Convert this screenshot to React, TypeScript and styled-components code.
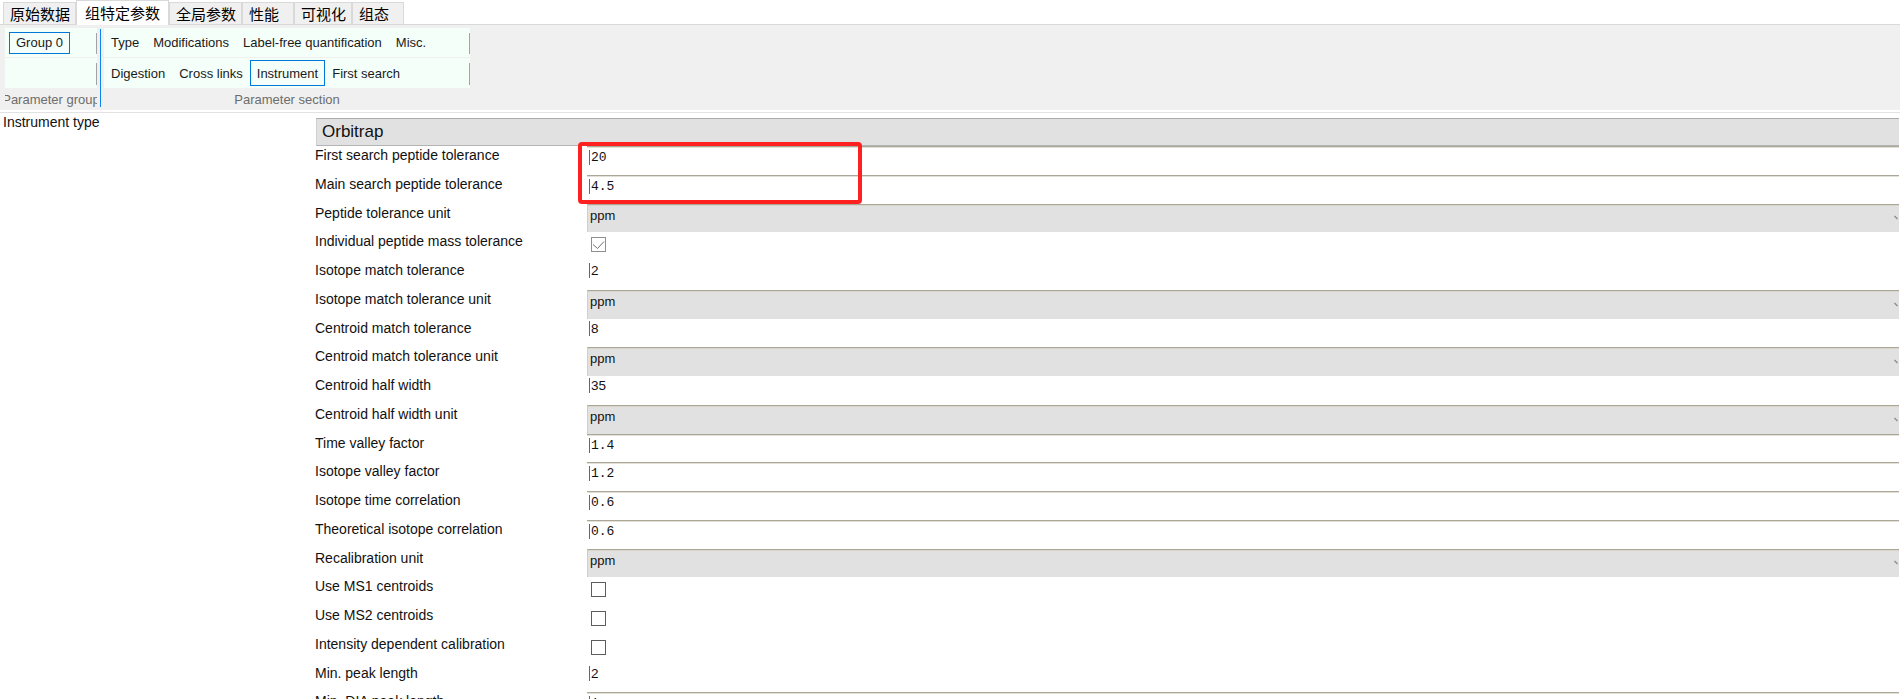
import styled, { createGlobalStyle } from "styled-components";

type Kind = "text" | "num" | "combo" | "check";

interface Param {
  label: string;
  kind: Kind;
  value?: string;
  checked?: boolean;
}

const tabs = ["原始数据", "组特定参数", "全局参数", "性能", "可视化", "组态"];

const sectionRows = [
  ["Type", "Modifications", "Label-free quantification", "Misc."],
  ["Digestion", "Cross links", "Instrument", "First search"],
];

const params: Param[] = [
  { label: "First search peptide tolerance", kind: "text", value: "20" },
  { label: "Main search peptide tolerance", kind: "text", value: "4.5" },
  { label: "Peptide tolerance unit", kind: "combo", value: "ppm" },
  { label: "Individual peptide mass tolerance", kind: "check", checked: true },
  { label: "Isotope match tolerance", kind: "num", value: "2" },
  { label: "Isotope match tolerance unit", kind: "combo", value: "ppm" },
  { label: "Centroid match tolerance", kind: "num", value: "8" },
  { label: "Centroid match tolerance unit", kind: "combo", value: "ppm" },
  { label: "Centroid half width", kind: "num", value: "35" },
  { label: "Centroid half width unit", kind: "combo", value: "ppm" },
  { label: "Time valley factor", kind: "text", value: "1.4" },
  { label: "Isotope valley factor", kind: "text", value: "1.2" },
  { label: "Isotope time correlation", kind: "text", value: "0.6" },
  { label: "Theoretical isotope correlation", kind: "text", value: "0.6" },
  { label: "Recalibration unit", kind: "combo", value: "ppm" },
  { label: "Use MS1 centroids", kind: "check", checked: false },
  { label: "Use MS2 centroids", kind: "check", checked: false },
  { label: "Intensity dependent calibration", kind: "check", checked: false },
  { label: "Min. peak length", kind: "num", value: "2" },
  { label: "Min. DIA peak length", kind: "text", value: "1" },
  { label: "Use intensity prediction", kind: "check", checked: false },
];

function Control({ p }: { p: Param }) {
  if (p.kind === "text") {
    return (
      <TextBox>
        <Caret $mono>{p.value}</Caret>
      </TextBox>
    );
  }
  if (p.kind === "num") {
    return (
      <NumBox>
        <Caret>{p.value}</Caret>
      </NumBox>
    );
  }
  if (p.kind === "combo") {
    return (
      <Combo>
        <ComboText>{p.value}</ComboText>
        <svg width="4" height="5" viewBox="0 0 4 5">
          <path d="M0.5 1 L3.5 4" stroke="#8a8a8a" strokeWidth="1.2" fill="none" />
        </svg>
      </Combo>
    );
  }
  return (
    <CheckCell>
      <CheckBox $checked={!!p.checked}>
        {p.checked && (
          <svg width="13" height="13" viewBox="0 0 13 13">
            <path d="M1 6.5 L5.5 10.5 L12 3.5" stroke="#6f6f6f" strokeWidth="1" fill="none" />
          </svg>
        )}
      </CheckBox>
    </CheckCell>
  );
}

export default function App() {
  return (
    <Page>
      <GlobalStyle />
      <TabStrip>
        {tabs.map((t, i) => (
          <Tab key={t} $active={i === 1}>
            {t}
          </Tab>
        ))}
      </TabStrip>

      <TopPanel>
        <Section $width={92}>
          <Strip $height={29}>
            <GroupButton>Group 0</GroupButton>
            <RowEdge />
          </Strip>
          <Strip $height={30}>
            <RowEdge />
          </Strip>
          <Caption>Parameter group</Caption>
        </Section>
        <Splitter />
        <Section $width={366}>
          {sectionRows.map((row, r) => (
            <Strip key={r} $height={r === 0 ? 29 : 30}>
              {row.map((item) => (
                <SectionItem key={item} $active={item === "Instrument"}>
                  {item}
                </SectionItem>
              ))}
              <RowEdge />
            </Strip>
          ))}
          <Caption>Parameter section</Caption>
        </Section>
      </TopPanel>

      <Main>
        <OuterLabel>Instrument type</OuterLabel>
        <div>
          <InstrumentCombo>Orbitrap</InstrumentCombo>
          <ParamGrid>
            {params.map((p) => (
              <ParamRow key={p.label}>
                <ParamLabel>{p.label}</ParamLabel>
                <Control p={p} />
              </ParamRow>
            ))}
          </ParamGrid>
        </div>
      </Main>

      <Highlight />
    </Page>
  );
}

const GlobalStyle = createGlobalStyle`
  html, body {
    margin: 0;
    padding: 0;
    background: #ffffff;
    overflow: hidden;
  }
  body {
    font-family: "Liberation Sans", Arial, sans-serif;
    color: #111;
  }
`;

const Page = styled.div`
  position: relative;
  width: 1900px;
  height: 699px;
  overflow: hidden;
  background: #fff;
`;

const TabStrip = styled.div`
  display: flex;
  align-items: flex-end;
  height: 24px;
  padding-left: 3px;
  position: relative;
  z-index: 1;
`;

const Tab = styled.div<{ $active: boolean }>`
  box-sizing: border-box;
  display: flex;
  align-items: center;
  min-width: 52px;
  height: ${(p) => (p.$active ? "25px" : "22px")};
  margin-bottom: ${(p) => (p.$active ? "-1px" : "0")};
  padding: ${(p) => (p.$active ? "0 8px 1px 8px" : "0 5px 0 6px")};
  border: 1px solid #d9d9d9;
  border-bottom: none;
  background: ${(p) => (p.$active ? "#ffffff" : "#f0f0f0")};
  font-family: "Noto Sans CJK SC", "Liberation Sans", sans-serif;
  font-size: 15px;
  line-height: 1;
  color: #000;
  white-space: nowrap;
`;

const TopPanel = styled.div`
  display: flex;
  height: 82px;
  padding: 3px 0 0 5px;
  box-sizing: content-box;
  background: #f0f0f0;
  border-top: 1px solid #d9d9d9;
  border-bottom: 2px solid #ffffff;
`;

const Section = styled.div<{ $width: number }>`
  display: flex;
  flex-direction: column;
  gap: 1px;
  width: ${(p) => p.$width}px;
`;

const Strip = styled.div<{ $height: number }>`
  display: flex;
  align-items: center;
  height: ${(p) => p.$height}px;
  background: #f5fffa;
`;

const RowEdge = styled.div`
  align-self: stretch;
  width: 1px;
  margin: 5px 0 3px auto;
  background: #a3a3a3;
`;

const GroupButton = styled.div`
  box-sizing: border-box;
  display: flex;
  align-items: center;
  height: 22px;
  margin-left: 4px;
  padding: 0 6px;
  border: 1px solid #0078d7;
  font-size: 13px;
  color: #1a1a1a;
`;

const SectionItem = styled.div<{ $active: boolean }>`
  box-sizing: border-box;
  display: flex;
  align-items: center;
  height: 26px;
  padding: 0 6px;
  border: 1px solid ${(p) => (p.$active ? "#0078d7" : "transparent")};
  font-size: 13px;
  color: #1a1a1a;
  white-space: nowrap;
`;

const Caption = styled.div`
  display: flex;
  justify-content: center;
  align-items: center;
  height: 21px;
  overflow: hidden;
  white-space: nowrap;
  font-size: 13px;
  color: #6d6d6d;
`;

const Splitter = styled.div`
  width: 1px;
  height: 78px;
  margin: 1px 3px 0 3px;
  background: #0a84f0;
`;

const Main = styled.div`
  display: grid;
  grid-template-columns: 315px 1fr;
  padding-right: 1px;
  border-top: 1px solid #e2e2e2;
  background: #fff;
`;

const OuterLabel = styled.div`
  padding: 1px 0 0 3px;
  font-size: 14px;
  line-height: 16px;
  color: #111;
`;

const InstrumentCombo = styled.div`
  box-sizing: border-box;
  display: flex;
  align-items: center;
  height: 28px;
  margin: 5px 0 0 1px;
  padding-left: 5px;
  background: #e1e1e1;
  border-top: 1px solid #acacac;
  border-bottom: 1px solid #b4b4b4;
  border-left: 1px solid #cfcfcf;
  font-size: 17px;
  color: #111;
`;

const ParamGrid = styled.div`
  display: grid;
  grid-auto-rows: 28.75px;
`;

const ParamRow = styled.div`
  display: grid;
  grid-template-columns: 272px 1fr;
`;

const ParamLabel = styled.div`
  padding-top: 1px;
  font-size: 14px;
  line-height: 16px;
  color: #111;
  white-space: nowrap;
`;

const TextBox = styled.div`
  box-sizing: border-box;
  padding-left: 2px;
  background: #fff;
  border-top: 1px solid #aca899;
  box-shadow: inset 0 1px 0 #e3e0d7;
`;

const NumBox = styled.div`
  padding: 0 0 0 2px;
  background: #fff;
`;

const Caret = styled.span<{ $mono?: boolean }>`
  display: inline-block;
  margin-top: 2px;
  height: 15px;
  padding-left: 1px;
  border-left: 1px solid #8c3ce0;
  font-family: ${(p) =>
    p.$mono ? `"Liberation Mono", "Courier New", monospace` : `"Liberation Sans", Arial, sans-serif`};
  font-size: ${(p) => (p.$mono ? "13px" : "13.5px")};
  line-height: 15px;
  color: #111;
`;

const Combo = styled.div`
  box-sizing: border-box;
  display: flex;
  align-items: flex-start;
  justify-content: space-between;
  padding: 3px 1px 0 2px;
  background: #e1e1e1;
  border-top: 1px solid #aca899;
  border-left: 1px solid #cfcfcf;
  box-shadow: inset 0 1px 0 #d8d5cc;

  svg {
    align-self: center;
    margin-top: -4px;
  }
`;

const ComboText = styled.span`
  font-size: 13px;
  line-height: 16px;
  color: #111;
`;

const CheckCell = styled.div`
  background: #fff;
`;

const CheckBox = styled.div<{ $checked: boolean }>`
  box-sizing: border-box;
  display: flex;
  align-items: center;
  justify-content: center;
  width: 15px;
  height: 15px;
  margin: 5px 0 0 4px;
  border: 1px solid ${(p) => (p.$checked ? "#8f8f8f" : "#5c5c5c")};
  background: #fff;
`;

const Highlight = styled.div`
  position: absolute;
  left: 578px;
  top: 142px;
  width: 284px;
  height: 62px;
  box-sizing: border-box;
  border: 4px solid #ff2020;
  border-radius: 4px;
  pointer-events: none;
`;
